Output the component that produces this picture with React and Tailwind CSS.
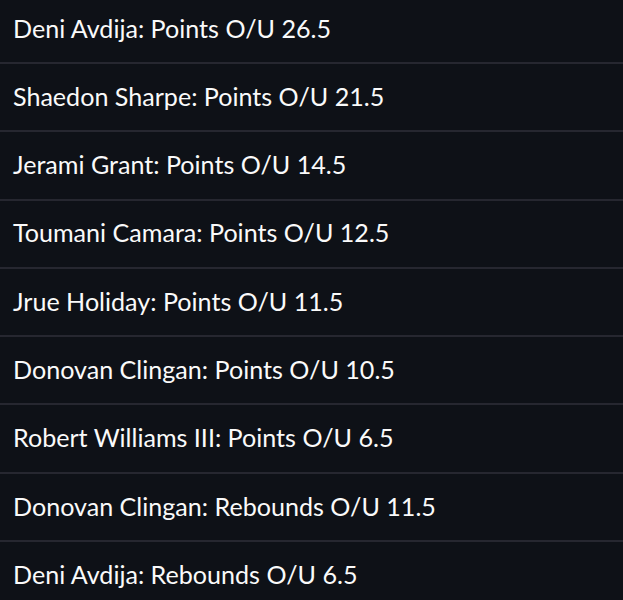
const props = [
  "Deni Avdija: Points O/U 26.5",
  "Shaedon Sharpe: Points O/U 21.5",
  "Jerami Grant: Points O/U 14.5",
  "Toumani Camara: Points O/U 12.5",
  "Jrue Holiday: Points O/U 11.5",
  "Donovan Clingan: Points O/U 10.5",
  "Robert Williams III: Points O/U 6.5",
  "Donovan Clingan: Rebounds O/U 11.5",
  "Deni Avdija: Rebounds O/U 6.5",
];

export default function App() {
  return (
    <div className="bg-[#0e1117] h-[600px] overflow-hidden text-[#fafafa] font-['Lato',sans-serif]">
      <div className="-mt-[4.3px]">
        {props.map((p) => (
          <div
            key={p}
            className="h-[68.3px] flex items-center px-[13px] pb-[1px] text-[25.1px] border-b-2 border-[#262730]"
          >
            {p}
          </div>
        ))}
      </div>
    </div>
  );
}
